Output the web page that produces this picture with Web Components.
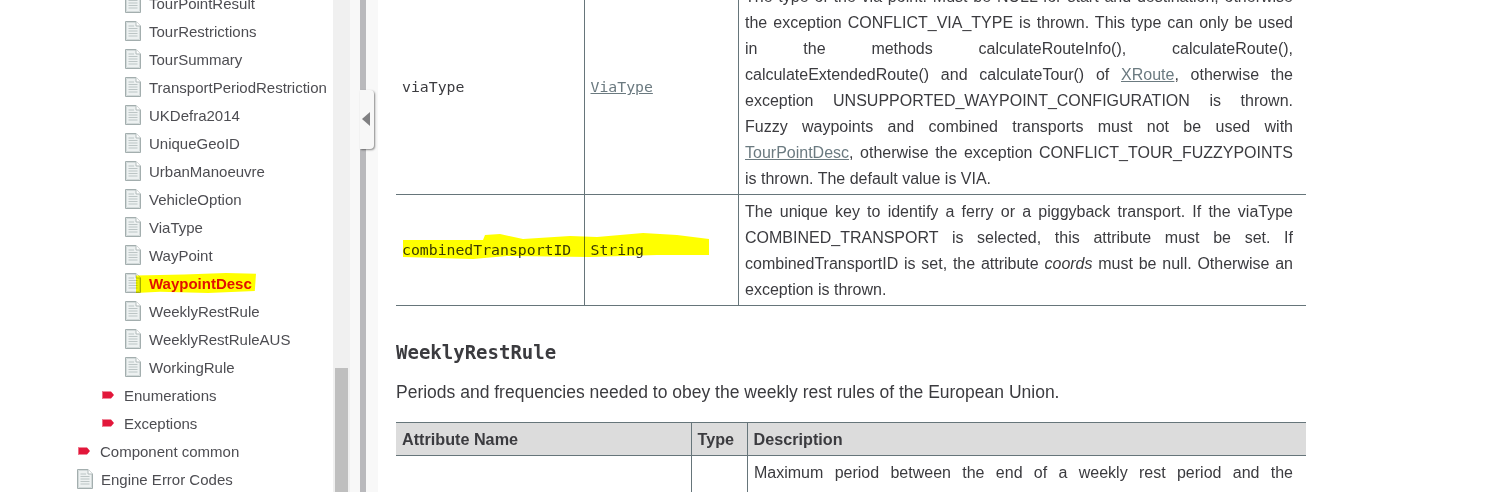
<!DOCTYPE html>
<html>
<head>
<meta charset="utf-8">
<title>Doc</title>
<style>
html, body { margin: 0; padding: 0; height: 492px; overflow: hidden; background: #fff; }
body { font-family: "Liberation Sans", Arial, sans-serif; color: #3b3b3f; }
</style>
</head>
<body>
<doc-page>
    <nav-tree slot="nav">
        <nav-item type="page" indent="125">TourPointResult</nav-item>
        <nav-item type="page" indent="125">TourRestrictions</nav-item>
        <nav-item type="page" indent="125">TourSummary</nav-item>
        <nav-item type="page" indent="125">TransportPeriodRestriction</nav-item>
        <nav-item type="page" indent="125">UKDefra2014</nav-item>
        <nav-item type="page" indent="125">UniqueGeoID</nav-item>
        <nav-item type="page" indent="125">UrbanManoeuvre</nav-item>
        <nav-item type="page" indent="125">VehicleOption</nav-item>
        <nav-item type="page" indent="125">ViaType</nav-item>
        <nav-item type="page" indent="125">WayPoint</nav-item>
        <nav-item type="page" indent="125" active>WaypointDesc</nav-item>
        <nav-item type="page" indent="125">WeeklyRestRule</nav-item>
        <nav-item type="page" indent="125">WeeklyRestRuleAUS</nav-item>
        <nav-item type="page" indent="125">WorkingRule</nav-item>
        <nav-item type="folder" indent="102">Enumerations</nav-item>
        <nav-item type="folder" indent="102">Exceptions</nav-item>
        <nav-item type="folder" indent="78">Component common</nav-item>
        <nav-item type="page" indent="77">Engine Error Codes</nav-item>
    </nav-tree>
    <doc-content slot="content"></doc-content>
</doc-page>

<script>
const PAGE_ICON = `
<svg width="16" height="20" viewBox="0 0 16 20">
    <path d="M.5.5H11L15.5 5V19.5H.5Z" fill="#e6ecec" stroke="#a3aeae"/>
    <path d="M1.5 1.5H10.5L14.5 5.5V18.5H1.5Z" fill="#edf1f1" stroke="#d3dada"/>
    <path d="M11 .5V5H15.5" fill="#fff" stroke="#b0baba"/>
    <path d="M3.5 5H9M3.5 7.5H12.5M3.5 10H12.5M3.5 12.5H12.5M3.5 15H12.5" stroke="#bcc5c5" stroke-width="1.2"/>
</svg>`;

const FOLDER_ICON = `
<svg width="12" height="8" viewBox="0 0 12 8">
    <path d="M0 .5H9L12 4L9 7.5H0Z" fill="#e2173a"/>
    <path d="M0 .5H1V7.5H0Z" fill="#ee6f85"/>
</svg>`;

class NavItem extends HTMLElement {
    constructor() {
        super();
        this.attachShadow({ mode: 'open' });
        const folder = this.getAttribute('type') === 'folder';
        const indent = this.getAttribute('indent');
        this.shadowRoot.innerHTML = `
            <style>
                :host {
                    display: flex;
                    position: relative;
                    align-items: center;
                    height: 28px;
                    padding-left: ${indent}px;
                    font-size: 15px;
                    color: #4d4d52;
                    white-space: nowrap;
                }
                .icon {
                    display: flex;
                    flex: none;
                    width: ${folder ? 22 : 24}px;
                }
                :host([active]) .label {
                    color: #e2100f;
                    font-weight: bold;
                }
                :host([active]) .mark {
                    position: absolute;
                    left: 136px;
                    top: 4px;
                    width: 120px;
                    height: 20px;
                    background: #ffff00;
                    mix-blend-mode: multiply;
                    clip-path: polygon(0 12%, 40% 8%, 75% 0, 100% 4%, 99% 90%, 60% 100%, 20% 94%, 0 100%);
                }
            </style>
            <span class="mark"></span>
            <span class="icon">${folder ? FOLDER_ICON : PAGE_ICON}</span>
            <span class="label"><slot></slot></span>
        `;
    }
}

class NavTree extends HTMLElement {
    constructor() {
        super();
        this.attachShadow({ mode: 'open' });
        this.shadowRoot.innerHTML = `
            <style>
                :host {
                    display: block;
                    margin-top: -11px;
                }
            </style>
            <slot></slot>
        `;
    }
}

class DocPage extends HTMLElement {
    constructor() {
        super();
        this.attachShadow({ mode: 'open' });
        this.shadowRoot.innerHTML = `
            <style>
                :host {
                    display: flex;
                    height: 492px;
                    overflow: hidden;
                }
                .nav {
                    flex: none;
                    width: 333px;
                    overflow: hidden;
                }
                .scrollbar {
                    flex: none;
                    position: relative;
                    width: 17px;
                    background: #f0f0f0;
                }
                .thumb {
                    position: absolute;
                    left: 2px;
                    right: 2px;
                    top: 368px;
                    bottom: 0;
                    background: #bfbfbf;
                }
                .gutter {
                    flex: none;
                    position: relative;
                    width: 28px;
                    background: #f8f8f8;
                }
                .gutter::before {
                    content: "";
                    position: absolute;
                    left: 10px;
                    top: 0;
                    bottom: 0;
                    width: 6px;
                    background: #b9b9bc;
                }
                .handle {
                    position: absolute;
                    left: 10px;
                    top: 90px;
                    width: 14px;
                    height: 59px;
                    background: #f7f7f7;
                    border-radius: 0 4px 4px 0;
                    box-shadow: 1px 1px 2px rgba(0, 0, 0, 0.45);
                }
                .handle::after {
                    content: "";
                    position: absolute;
                    left: 2px;
                    top: 22px;
                    border: 7.5px solid transparent;
                    border-left: 0;
                    border-right: 8px solid #808082;
                }
                .content {
                    flex: 1;
                    min-width: 0;
                }
            </style>
            <div class="nav"><slot name="nav"></slot></div>
            <div class="scrollbar"><div class="thumb"></div></div>
            <div class="gutter"><div class="handle"></div></div>
            <div class="content"><slot name="content"></slot></div>
        `;
    }
}

class DocContent extends HTMLElement {
    constructor() {
        super();
        this.attachShadow({ mode: 'open' });
        this.shadowRoot.innerHTML = `
            <style>
                :host {
                    display: block;
                    width: 910px;
                    margin-left: 18px;
                    margin-top: -20px;
                    font-size: 16px;
                    color: #3b3b3f;
                }
                table {
                    border-collapse: collapse;
                    table-layout: fixed;
                    width: 910px;
                }
                td, th {
                    border: 1px solid #66757a;
                    padding: 0 6px;
                    line-height: 26px;
                    text-align: left;
                }
                tr > :first-child { border-left: 0; }
                tr > :last-child { border-right: 0; }
                .first tr:first-child td { border-top: 0; }
                td.desc {
                    text-align: justify;
                    padding: 4px 13px 2px 6.5px;
                }
                td.cut {
                    text-align-last: justify;
                    padding-bottom: 40px;
                }
                code {
                    font-family: "DejaVu Sans Mono", monospace;
                    font-size: 14.8px;
                }
                a {
                    color: #6b7a80;
                    text-decoration: underline;
                }
                h3 {
                    font-family: "DejaVu Sans Mono", monospace;
                    font-size: 19px;
                    font-weight: bold;
                    line-height: 24px;
                    margin: 34px 0 15px;
                }
                p {
                    margin: 0 0 17px;
                    font-size: 17.5px;
                    line-height: 26px;
                }
                th {
                    background: #dcdcdc;
                    height: 32px;
                    padding-top: 0;
                    padding-bottom: 0;
                    font-size: 16.2px;
                }
                .mark {
                    position: absolute;
                    left: 402px;
                    top: 233px;
                    width: 308px;
                    height: 27px;
                    background: #ffff00;
                    mix-blend-mode: multiply;
                    clip-path: polygon(1px 7px, 81px 7px, 83px 2px, 98px 1px, 121px 6px, 168px 3px, 195px 4px, 241px 0, 275px 2px, 307px 6px, 307px 22px, 255px 22px, 188px 24px, 105px 23px, 71px 26px, 1px 24px);
                }
            </style>
            <div class="mark"></div>
            <table class="first">
                <colgroup><col style="width:188px"><col style="width:154px"><col></colgroup>
                <tr>
                    <td><code>viaType</code></td>
                    <td><code><a>ViaType</a></code></td>
                    <td class="desc">The type of the via point. Must be NULL for start and destination, otherwise the exception CONFLICT_VIA_TYPE is thrown. This type can only be used in the methods calculateRouteInfo(), calculateRoute(), calculateExtendedRoute() and calculateTour() of <a>XRoute</a>, otherwise the exception UNSUPPORTED_WAYPOINT_CONFIGURATION is thrown. Fuzzy waypoints and combined transports must not be used with <a>TourPointDesc</a>, otherwise the exception CONFLICT_TOUR_FUZZYPOINTS is thrown. The default value is VIA.</td>
                </tr>
                <tr>
                    <td><code>combinedTransportID</code></td>
                    <td><code>String</code></td>
                    <td class="desc">The unique key to identify a ferry or a piggyback transport. If the viaType COMBINED_TRANSPORT is selected, this attribute must be set. If combinedTransportID is set, the attribute <em>coords</em> must be null. Otherwise an exception is thrown.</td>
                </tr>
            </table>
            <h3>WeeklyRestRule</h3>
            <p>Periods and frequencies needed to obey the weekly rest rules of the European Union.</p>
            <table>
                <colgroup><col style="width:295px"><col style="width:56px"><col></colgroup>
                <tr><th>Attribute Name</th><th>Type</th><th>Description</th></tr>
                <tr>
                    <td></td>
                    <td></td>
                    <td class="desc cut">Maximum period between the end of a weekly rest period and the</td>
                </tr>
            </table>
        `;
    }
}

customElements.define('nav-item', NavItem);
customElements.define('nav-tree', NavTree);
customElements.define('doc-content', DocContent);
customElements.define('doc-page', DocPage);
</script>
</body>
</html>
